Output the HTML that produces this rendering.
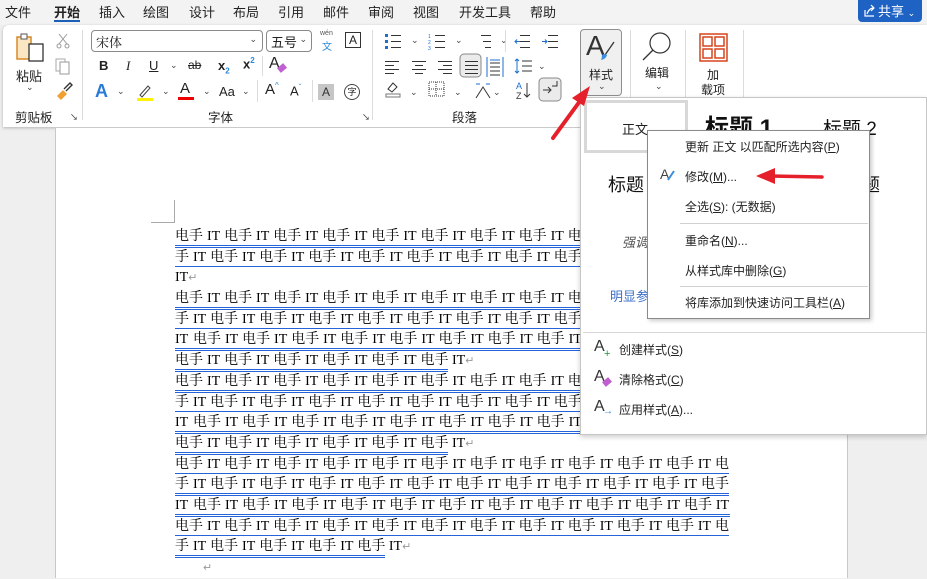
<!DOCTYPE html>
<html><head><meta charset="utf-8">
<style>
*{margin:0;padding:0;box-sizing:border-box}
body{width:927px;height:578px;overflow:hidden;position:relative;background:#efefef;font-family:"Liberation Sans","Noto Sans CJK SC",sans-serif;color:#222}
.a{position:absolute}
.t{font-size:13px;top:2px;white-space:nowrap}
.ui{font-size:12px;white-space:nowrap}
#tabs{left:0;top:0;width:927px;height:25px;background:#f3f3f3}
#rib{left:3px;top:25px;width:924px;height:102px;background:#fff;border-radius:6px 0 0 0;box-shadow:0 1px 3px rgba(0,0,0,.25)}
.sep{position:absolute;width:1px;background:#dcdcdc}
.dd{font-size:9px;color:#444}
.doc{left:175px;top:227px;width:555px;font-family:"Liberation Serif","Noto Serif CJK SC",serif;font-size:14px;line-height:20.7px;color:#000}
.ln{height:20.7px;white-space:nowrap;overflow:hidden}
.ul{display:inline-block;border-bottom:3px double #2563d8;line-height:17px;height:20px}
.doc i{font-style:normal;display:inline-block;width:14px;text-align:center}
.doc u{text-decoration:none;display:inline-block;width:21.1px;text-align:center}
.doc u.f{width:18px;text-align:left}
.rt{color:#999;font-size:11px}
.mi{position:absolute;left:685px;font-size:12px;white-space:nowrap;color:#222}
.mi span{text-decoration:underline}
</style></head><body>

<div id="tabs" class="a">
<span class="a t" style="left:5px">文件</span>
<span class="a t" style="left:54px;font-weight:bold">开始</span>
<div class="a" style="left:54px;top:20px;width:26px;height:2px;background:#1c5fb8"></div>
<span class="a t" style="left:99px">插入</span>
<span class="a t" style="left:143px">绘图</span>
<span class="a t" style="left:189px">设计</span>
<span class="a t" style="left:233px">布局</span>
<span class="a t" style="left:278px">引用</span>
<span class="a t" style="left:323px">邮件</span>
<span class="a t" style="left:368px">审阅</span>
<span class="a t" style="left:413px">视图</span>
<span class="a t" style="left:459px">开发工具</span>
<span class="a t" style="left:530px">帮助</span>
<div class="a" style="left:858px;top:0;width:64px;height:22px;background:#1e62c4;border-radius:0 0 4px 4px;color:#fff;font-size:13px;padding:1px 0 0 20px">共享 <span style="font-size:9px">⌄</span>
<svg class="a" style="left:5px;top:4px" width="13" height="13"><path d="M2 6v6h9" fill="none" stroke="#fff" stroke-width="1.2"/><path d="M4 10 Q6 4 11 4 M8 1l3 3-3 3" fill="none" stroke="#fff" stroke-width="1.2"/></svg></div>
</div>

<div id="rib" class="a"></div>
<svg class="a" style="left:15px;top:32px" width="32" height="32"><rect x="2" y="5" width="14" height="22" fill="#fbe6c4" stroke="#d98a26" stroke-width="1.5"/><rect x="6" y="2" width="6" height="5" fill="#fff" stroke="#555"/><rect x="14" y="12" width="14" height="17" fill="#fff" stroke="#333" stroke-width="1.3"/></svg>
<span class="a ui" style="left:16px;top:66px;font-size:13px">粘贴</span>
<span class="a dd" style="left:26px;top:82px">⌄</span>
<svg class="a" style="left:56px;top:33px" width="14" height="16"><path d="M3 1l8 10M11 1L3 11" stroke="#999" fill="none"/><circle cx="3" cy="13" r="2" fill="none" stroke="#999"/><circle cx="11" cy="13" r="2" fill="none" stroke="#999"/></svg>
<svg class="a" style="left:55px;top:58px" width="16" height="18"><rect x="1" y="1" width="9" height="12" fill="none" stroke="#aaa"/><rect x="5" y="4" width="9" height="12" fill="#fff" stroke="#999"/></svg>
<svg class="a" style="left:55px;top:82px" width="18" height="18"><path d="M2 14l6-6 4 4-6 6z" fill="#f0a030"/><path d="M9 7l6-6 2 2-6 6" fill="none" stroke="#333" stroke-width="1.4"/></svg>
<span class="a ui" style="left:15px;top:107px;font-size:12.5px">剪贴板</span>
<span class="a" style="left:70px;top:112px;font-size:8px">↘</span>
<div class="sep" style="left:82px;top:30px;height:90px"></div>
<div class="a" style="left:91px;top:30px;width:172px;height:22px;border:1px solid #8a8a8a;border-radius:4px;font-size:13px;padding:1px 4px;font-family:'Liberation Serif','Noto Serif CJK SC',serif">宋体<span class="a dd" style="right:5px;top:3px">⌄</span></div>
<div class="a" style="left:266px;top:30px;width:46px;height:22px;border:1px solid #8a8a8a;border-radius:4px;font-size:13px;padding:1px 4px">五号<span class="a dd" style="right:4px;top:3px">⌄</span></div>
<span class="a" style="left:320px;top:30px;font-size:7px;color:#555">wén</span>
<span class="a" style="left:322px;top:38px;font-size:10px;color:#2a8ad8">文</span>
<div class="a" style="left:345px;top:32px;width:16px;height:16px;border:1px solid #333;font-size:12px;text-align:center;line-height:14px">A</div>
<span class="a" style="left:99px;top:58px;font-size:13px;font-weight:bold">B</span>
<span class="a" style="left:126px;top:58px;font-size:13px;font-style:italic;font-family:'Liberation Serif'">I</span>
<span class="a" style="left:149px;top:58px;font-size:13px;text-decoration:underline">U</span><span class="a dd" style="left:170px;top:60px">⌄</span>
<span class="a" style="left:188px;top:58px;font-size:12px;text-decoration:line-through">ab</span>
<span class="a" style="left:218px;top:58px;font-size:13px;font-weight:bold">x<sub style="font-size:8px;color:#2a8ad8">2</sub></span>
<span class="a" style="left:243px;top:56px;font-size:13px;font-weight:bold">x<sup style="font-size:8px;color:#2a8ad8">2</sup></span>
<div class="sep" style="left:262px;top:56px;height:20px"></div>
<span class="a" style="left:269px;top:55px;font-size:16px">A</span><span class="a" style="left:278px;top:65px;width:8px;height:6px;background:#c060d0;transform:rotate(-40deg)"></span>
<span class="a" style="left:95px;top:81px;font-size:18px;font-weight:bold;color:#2a7ad8">A</span><span class="a dd" style="left:117px;top:86px">⌄</span>
<svg class="a" style="left:136px;top:83px" width="18" height="18"><path d="M4 12l8-9 2 2-8 9z" fill="none" stroke="#444"/><rect x="1" y="15" width="16" height="3" fill="#fff200"/></svg><span class="a dd" style="left:162px;top:86px">⌄</span>
<span class="a" style="left:180px;top:80px;font-size:15px">A</span><div class="a" style="left:178px;top:97px;width:16px;height:3px;background:#e00"></div><span class="a dd" style="left:203px;top:86px">⌄</span>
<span class="a" style="left:219px;top:84px;font-size:13px">Aa</span><span class="a dd" style="left:242px;top:86px">⌄</span>
<div class="sep" style="left:257px;top:80px;height:22px"></div>
<span class="a" style="left:265px;top:81px;font-size:15px">A<sup style="font-size:8px;color:#2a8ad8">^</sup></span>
<span class="a" style="left:290px;top:83px;font-size:13px">A<sup style="font-size:8px;color:#2a8ad8">ˇ</sup></span>
<div class="sep" style="left:312px;top:80px;height:22px"></div>
<div class="a" style="left:318px;top:84px;width:16px;height:16px;background:#c6c6c6;font-size:12px;text-align:center;line-height:16px;color:#333">A</div>
<div class="a" style="left:344px;top:84px;width:16px;height:16px;border:1px solid #444;border-radius:50%;font-size:9px;text-align:center;line-height:14px">字</div>
<span class="a ui" style="left:208px;top:107px;font-size:12.5px">字体</span>
<span class="a" style="left:362px;top:112px;font-size:8px">↘</span>
<div class="sep" style="left:372px;top:30px;height:90px"></div>
<svg class="a" style="left:384px;top:32px" width="190" height="72" fill="none" stroke="#333">
<g><rect x="1" y="2" width="3" height="3" fill="#1a6fd0" stroke="none"/><rect x="1" y="8" width="3" height="3" fill="#1a6fd0" stroke="none"/><rect x="1" y="14" width="3" height="3" fill="#1a6fd0" stroke="none"/><path d="M7 3.5h10M7 9.5h10M7 15.5h10"/></g>
<g transform="translate(44,0)"><path d="M7 3.5h10M7 9.5h10M7 15.5h10"/><text x="0" y="6" font-size="5" fill="#1a6fd0" stroke="none">1</text><text x="0" y="12" font-size="5" fill="#1a6fd0" stroke="none">2</text><text x="0" y="18" font-size="5" fill="#1a6fd0" stroke="none">3</text></g>
<g transform="translate(90,0)"><path d="M7 3.5h10M9 9.5h8M11 15.5h6"/></g>
<g transform="translate(130,0)" stroke="#333"><path d="M6 3.5h10M6 9.5h10M6 15.5h10"/><path d="M1 9.5h5M3 7.5l-2 2 2 2" stroke="#1a6fd0"/></g>
<g transform="translate(158,0)"><path d="M6 3.5h10M6 9.5h10M6 15.5h10"/><path d="M0 9.5h5M3 7.5l2 2-2 2" stroke="#1a6fd0"/></g>
<g transform="translate(0,26)"><path d="M1 3.5h14M1 7.5h9M1 11.5h14M1 15.5h9"/></g>
<g transform="translate(27,26)"><path d="M1 3.5h14M4 7.5h8M1 11.5h14M4 15.5h8"/></g>
<g transform="translate(53,26)"><path d="M1 3.5h14M6 7.5h9M1 11.5h14M6 15.5h9"/></g>
<rect x="76" y="22" width="21" height="23" rx="4" fill="#ebebeb" stroke="#888"/>
<g transform="translate(80,26)"><path d="M1 3.5h13M1 7.5h13M1 11.5h13M1 15.5h13"/></g>
<g transform="translate(102,25)"><path d="M1 0v20M17 0v20" stroke="#1a6fd0"/><path d="M4 6h10M4 10h10M4 14h10M4 18h10"/><path d="M4 3h10" stroke="#1a6fd0"/></g>
<g transform="translate(130,25)"><path d="M3 2v14M1 4l2-2 2 2M1 14l2 2 2-2" stroke="#1a6fd0"/><path d="M8 4h10M8 9h10M8 14h10"/></g>
<g transform="translate(0,48)"><path d="M2 14h14v3H2z" stroke="#777"/><path d="M4 9l5-6 4 4-5 5z"/></g>
<g transform="translate(44,48)" stroke-dasharray="1 1"><rect x="1" y="2" width="15" height="14"/><path d="M8 2v14M1 9h15"/></g>
<g transform="translate(90,48)"><path d="M2 18L9 7l7 11"/><path d="M2 4h4M12 4h4" stroke="#1a6fd0"/></g>
<g transform="translate(130,48)"><text x="2" y="9" font-size="9" fill="#1a6fd0" stroke="none">A</text><text x="2" y="19" font-size="9" fill="#333" stroke="none">Z</text><path d="M13 3v14M10 14l3 3 3-3"/></g>
<rect x="155" y="46" width="22" height="23" rx="4" fill="#ebebeb" stroke="#888"/>
<path d="M159 58h8M164 55l3 3-3 3M168 54h5v-5"/>
</svg>
<span class="a dd" style="left:411px;top:35px">⌄</span><span class="a dd" style="left:455px;top:35px">⌄</span><span class="a dd" style="left:500px;top:35px">⌄</span>
<span class="a dd" style="left:538px;top:61px">⌄</span><span class="a dd" style="left:410px;top:87px">⌄</span><span class="a dd" style="left:454px;top:87px">⌄</span><span class="a dd" style="left:493px;top:87px">⌄</span>
<div class="sep" style="left:505px;top:30px;height:22px"></div>
<span class="a ui" style="left:452px;top:107px;font-size:12.5px">段落</span>
<div class="a" style="left:580px;top:29px;width:42px;height:67px;border:1px solid #8f8f8f;border-radius:4px;background:#f0f0f0"></div>
<span class="a" style="left:586px;top:30px;font-size:28px;font-family:'Liberation Sans';color:#333;font-weight:300">A</span>
<svg class="a" style="left:598px;top:40px" width="18" height="22"><path d="M16 2L7 15" stroke="#333" stroke-width="1.3"/><path d="M4 15q3-2 5 0-1 4-6 5 1-2 1-5z" fill="#3a8fe0"/></svg>
<span class="a ui" style="left:589px;top:66px">样式</span>
<span class="a dd" style="left:598px;top:81px">⌄</span>
<div class="sep" style="left:630px;top:30px;height:68px"></div>
<svg class="a" style="left:640px;top:30px" width="34" height="32"><circle cx="20" cy="13" r="10" fill="none" stroke="#333" stroke-width="1.2"/><path d="M13 20L3 30" stroke="#333" stroke-width="1.3"/></svg>
<span class="a ui" style="left:645px;top:64px">编辑</span>
<span class="a dd" style="left:655px;top:81px">⌄</span>
<div class="sep" style="left:685px;top:30px;height:68px"></div>
<svg class="a" style="left:699px;top:33px" width="30" height="30" fill="none" stroke="#d8431c" stroke-width="1.5"><rect x="1" y="1" width="27" height="27"/><rect x="4" y="4" width="9" height="9"/><rect x="16" y="4" width="9" height="9"/><rect x="4" y="16" width="9" height="9"/><rect x="16" y="16" width="9" height="9"/></svg>
<span class="a ui" style="left:707px;top:66px">加</span>
<span class="a ui" style="left:701px;top:81px">载项</span>
<div class="sep" style="left:743px;top:30px;height:68px"></div>

<div class="a" style="left:55px;top:128px;width:793px;height:450px;background:#fff;border-left:1px solid #c8c8c8;border-right:1px solid #c8c8c8"></div>
<div class="a" style="left:151px;top:222px;width:24px;height:1px;background:#aaa"></div>
<div class="a" style="left:174px;top:200px;width:1px;height:23px;background:#aaa"></div>

<div class="a doc">
<div class="ln"><span class="ul"><i>电</i><i>手</i><u>IT</u><i>电</i><i>手</i><u>IT</u><i>电</i><i>手</i><u>IT</u><i>电</i><i>手</i><u>IT</u><i>电</i><i>手</i><u>IT</u><i>电</i><i>手</i><u>IT</u><i>电</i><i>手</i><u>IT</u><i>电</i><i>手</i><u>IT</u><i>电</i><i>手</i><u>IT</u><i>电</i><i>手</i><u>IT</u><i>电</i><i>手</i><u>IT</u><i>电</i></span></div>
<div class="ln"><span class="ul"><i>手</i><u>IT</u><i>电</i><i>手</i><u>IT</u><i>电</i><i>手</i><u>IT</u><i>电</i><i>手</i><u>IT</u><i>电</i><i>手</i><u>IT</u><i>电</i><i>手</i><u>IT</u><i>电</i><i>手</i><u>IT</u><i>电</i><i>手</i><u>IT</u><i>电</i><i>手</i><u>IT</u><i>电</i><i>手</i><u>IT</u><i>电</i><i>手</i><u>IT</u><i>电</i><i>手</i></span></div>
<div class="ln">IT<span class="rt">↵</span></div>
<div class="ln"><span class="ul"><i>电</i><i>手</i><u>IT</u><i>电</i><i>手</i><u>IT</u><i>电</i><i>手</i><u>IT</u><i>电</i><i>手</i><u>IT</u><i>电</i><i>手</i><u>IT</u><i>电</i><i>手</i><u>IT</u><i>电</i><i>手</i><u>IT</u><i>电</i><i>手</i><u>IT</u><i>电</i><i>手</i><u>IT</u><i>电</i><i>手</i><u>IT</u><i>电</i><i>手</i><u>IT</u><i>电</i></span></div>
<div class="ln"><span class="ul"><i>手</i><u>IT</u><i>电</i><i>手</i><u>IT</u><i>电</i><i>手</i><u>IT</u><i>电</i><i>手</i><u>IT</u><i>电</i><i>手</i><u>IT</u><i>电</i><i>手</i><u>IT</u><i>电</i><i>手</i><u>IT</u><i>电</i><i>手</i><u>IT</u><i>电</i><i>手</i><u>IT</u><i>电</i><i>手</i><u>IT</u><i>电</i><i>手</i><u>IT</u><i>电</i><i>手</i></span></div>
<div class="ln"><span class="ul"><u class="f">IT</u><i>电</i><i>手</i><u>IT</u><i>电</i><i>手</i><u>IT</u><i>电</i><i>手</i><u>IT</u><i>电</i><i>手</i><u>IT</u><i>电</i><i>手</i><u>IT</u><i>电</i><i>手</i><u>IT</u><i>电</i><i>手</i><u>IT</u><i>电</i><i>手</i><u>IT</u><i>电</i><i>手</i><u>IT</u><i>电</i><i>手</i><u>IT</u><i>电</i><i>手</i><u>IT</u></span></div>
<div class="ln"><span class="ul"><i>电</i><i>手</i><u>IT</u><i>电</i><i>手</i><u>IT</u><i>电</i><i>手</i><u>IT</u><i>电</i><i>手</i><u>IT</u><i>电</i><i>手</i><u>IT</u><i>电</i><i>手</i></span> IT<span class="rt">↵</span></div>
<div class="ln"><span class="ul"><i>电</i><i>手</i><u>IT</u><i>电</i><i>手</i><u>IT</u><i>电</i><i>手</i><u>IT</u><i>电</i><i>手</i><u>IT</u><i>电</i><i>手</i><u>IT</u><i>电</i><i>手</i><u>IT</u><i>电</i><i>手</i><u>IT</u><i>电</i><i>手</i><u>IT</u><i>电</i><i>手</i><u>IT</u><i>电</i><i>手</i><u>IT</u><i>电</i><i>手</i><u>IT</u><i>电</i></span></div>
<div class="ln"><span class="ul"><i>手</i><u>IT</u><i>电</i><i>手</i><u>IT</u><i>电</i><i>手</i><u>IT</u><i>电</i><i>手</i><u>IT</u><i>电</i><i>手</i><u>IT</u><i>电</i><i>手</i><u>IT</u><i>电</i><i>手</i><u>IT</u><i>电</i><i>手</i><u>IT</u><i>电</i><i>手</i><u>IT</u><i>电</i><i>手</i><u>IT</u><i>电</i><i>手</i><u>IT</u><i>电</i><i>手</i></span></div>
<div class="ln"><span class="ul"><u class="f">IT</u><i>电</i><i>手</i><u>IT</u><i>电</i><i>手</i><u>IT</u><i>电</i><i>手</i><u>IT</u><i>电</i><i>手</i><u>IT</u><i>电</i><i>手</i><u>IT</u><i>电</i><i>手</i><u>IT</u><i>电</i><i>手</i><u>IT</u><i>电</i><i>手</i><u>IT</u><i>电</i><i>手</i><u>IT</u><i>电</i><i>手</i><u>IT</u><i>电</i><i>手</i><u>IT</u></span></div>
<div class="ln"><span class="ul"><i>电</i><i>手</i><u>IT</u><i>电</i><i>手</i><u>IT</u><i>电</i><i>手</i><u>IT</u><i>电</i><i>手</i><u>IT</u><i>电</i><i>手</i><u>IT</u><i>电</i><i>手</i></span> IT<span class="rt">↵</span></div>
<div class="ln"><span class="ul"><i>电</i><i>手</i><u>IT</u><i>电</i><i>手</i><u>IT</u><i>电</i><i>手</i><u>IT</u><i>电</i><i>手</i><u>IT</u><i>电</i><i>手</i><u>IT</u><i>电</i><i>手</i><u>IT</u><i>电</i><i>手</i><u>IT</u><i>电</i><i>手</i><u>IT</u><i>电</i><i>手</i><u>IT</u><i>电</i><i>手</i><u>IT</u><i>电</i><i>手</i><u>IT</u><i>电</i></span></div>
<div class="ln"><span class="ul"><i>手</i><u>IT</u><i>电</i><i>手</i><u>IT</u><i>电</i><i>手</i><u>IT</u><i>电</i><i>手</i><u>IT</u><i>电</i><i>手</i><u>IT</u><i>电</i><i>手</i><u>IT</u><i>电</i><i>手</i><u>IT</u><i>电</i><i>手</i><u>IT</u><i>电</i><i>手</i><u>IT</u><i>电</i><i>手</i><u>IT</u><i>电</i><i>手</i><u>IT</u><i>电</i><i>手</i></span></div>
<div class="ln"><span class="ul"><u class="f">IT</u><i>电</i><i>手</i><u>IT</u><i>电</i><i>手</i><u>IT</u><i>电</i><i>手</i><u>IT</u><i>电</i><i>手</i><u>IT</u><i>电</i><i>手</i><u>IT</u><i>电</i><i>手</i><u>IT</u><i>电</i><i>手</i><u>IT</u><i>电</i><i>手</i><u>IT</u><i>电</i><i>手</i><u>IT</u><i>电</i><i>手</i><u>IT</u><i>电</i><i>手</i><u>IT</u></span></div>
<div class="ln"><span class="ul"><i>电</i><i>手</i><u>IT</u><i>电</i><i>手</i><u>IT</u><i>电</i><i>手</i><u>IT</u><i>电</i><i>手</i><u>IT</u><i>电</i><i>手</i><u>IT</u><i>电</i><i>手</i><u>IT</u><i>电</i><i>手</i><u>IT</u><i>电</i><i>手</i><u>IT</u><i>电</i><i>手</i><u>IT</u><i>电</i><i>手</i><u>IT</u><i>电</i><i>手</i><u>IT</u><i>电</i></span></div>
<div class="ln"><span class="ul"><i>手</i><u>IT</u><i>电</i><i>手</i><u>IT</u><i>电</i><i>手</i><u>IT</u><i>电</i><i>手</i><u>IT</u><i>电</i><i>手</i></span> IT<span class="rt">↵</span></div>
<div class="ln" style="padding-left:28px"><span class="rt">↵</span></div>
</div>

<div class="a" style="left:580px;top:97px;width:347px;height:338px;background:#fff;border:1px solid #c6c6c6;box-shadow:0 2px 5px rgba(0,0,0,.2)"></div>
<div class="a" style="left:584px;top:100px;width:104px;height:53px;border:3px solid #d8d8d8"></div>
<span class="a ui" style="left:622px;top:119px;font-size:13px">正文</span>
<span class="a" style="left:705px;top:108px;font-size:24px;font-weight:bold;color:#111">标题 1</span>
<span class="a" style="left:823px;top:114px;font-size:19px;color:#111">标题 2</span>
<span class="a" style="left:608px;top:171px;font-size:18px;color:#111">标题</span>
<span class="a" style="left:862px;top:171px;font-size:18px;color:#111">题</span>
<span class="a" style="left:622px;top:232px;font-size:13px;font-style:italic;color:#555">强调</span>
<span class="a" style="left:610px;top:286px;font-size:13px;color:#3a6fc8">明显参</span>
<div class="a" style="left:583px;top:332px;width:344px;height:1px;background:#d6d6d6"></div>
<span class="a" style="left:594px;top:338px;font-size:16px;color:#333">A</span><span class="a" style="left:604px;top:348px;font-size:11px;color:#1a9a3a">+</span>
<span class="a ui" style="left:619px;top:341px">创建样式(<span style="text-decoration:underline">S</span>)</span>
<span class="a" style="left:594px;top:368px;font-size:16px;color:#333">A</span><span class="a" style="left:603px;top:379px;width:8px;height:6px;background:#c060d0;transform:rotate(-40deg)"></span>
<span class="a ui" style="left:619px;top:371px">清除格式(<span style="text-decoration:underline">C</span>)</span>
<span class="a" style="left:594px;top:398px;font-size:16px;color:#333">A</span><span class="a" style="left:603px;top:406px;font-size:10px;color:#2a7ad8">→</span>
<span class="a ui" style="left:619px;top:401px">应用样式(<span style="text-decoration:underline">A</span>)...</span>

<div class="a" style="left:647px;top:130px;width:223px;height:189px;background:#fff;border:1px solid #8a8a8a;box-shadow:2px 2px 4px rgba(0,0,0,.2)"></div>
<span class="mi" style="top:138px">更新 正文 以匹配所选内容(<span>P</span>)</span>
<span class="a" style="left:660px;top:166px;font-size:14px;color:#444">A</span>
<svg class="a" style="left:666px;top:170px" width="10" height="12"><path d="M8 1L2 10" stroke="#3a8fe0" stroke-width="2"/></svg>
<span class="mi" style="top:168px">修改(<span>M</span>)...</span>
<span class="mi" style="top:198px">全选(<span>S</span>): (无数据)</span>
<div class="a" style="left:680px;top:223px;width:188px;height:1px;background:#d0d0d0"></div>
<span class="mi" style="top:232px">重命名(<span>N</span>)...</span>
<span class="mi" style="top:262px">从样式库中删除(<span>G</span>)</span>
<div class="a" style="left:680px;top:286px;width:188px;height:1px;background:#d0d0d0"></div>
<span class="mi" style="top:294px">将库添加到快速访问工具栏(<span>A</span>)</span>

<svg class="a" style="left:0;top:0" width="927" height="578">
<path d="M553 138L580 101" stroke="#e5202a" stroke-width="4" stroke-linecap="round"/>
<path d="M590 86L572 98L584 106Z" fill="#e5202a"/>
<path d="M822 177L770 176" stroke="#e5202a" stroke-width="3.5" stroke-linecap="round"/>
<path d="M756 176L775 168L775 184Z" fill="#e5202a"/>
</svg>
</body></html>
